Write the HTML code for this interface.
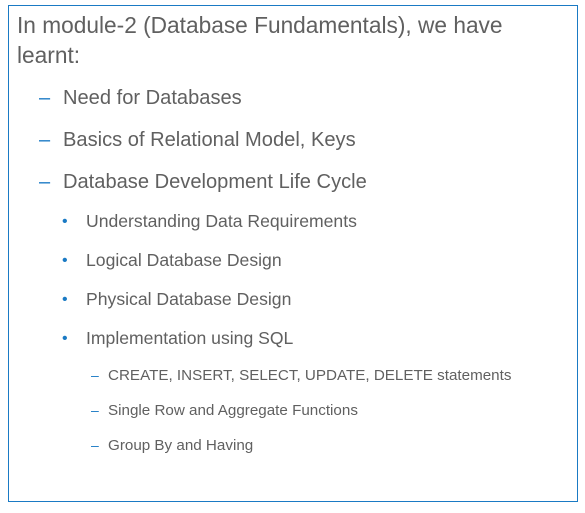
<!DOCTYPE html>
<html><head><style>
body{margin:0;width:585px;height:513px;background:#fff;font-family:"Liberation Sans",sans-serif;color:#606060;position:relative;overflow:hidden}
.box{position:absolute;left:8px;top:5px;width:568px;height:495px;border:1px solid #1a7ac4}
.t{position:absolute;white-space:nowrap;line-height:1}
.b{color:#1a7ac4;position:absolute;white-space:nowrap;line-height:1}
</style></head><body>
<div class="box"></div>
<div class="t" style="left:17px;top:14px;font-size:22.7px">In module-2 (Database Fundamentals), we have</div>
<div class="t" style="left:17px;top:44px;font-size:22.7px">learnt:</div>

<div class="b" style="left:39px;top:88px;font-size:20px">–</div>
<div class="t" style="left:63px;top:88px;font-size:20.1px">Need for Databases</div>
<div class="b" style="left:39px;top:130px;font-size:20px">–</div>
<div class="t" style="left:63px;top:130px;font-size:20.1px">Basics of Relational Model, Keys</div>
<div class="b" style="left:39px;top:172px;font-size:20px">–</div>
<div class="t" style="left:63px;top:172px;font-size:20.1px">Database Development Life Cycle</div>

<div class="b" style="left:62px;top:214px;font-size:16px">•</div>
<div class="t" style="left:86px;top:213px;font-size:17.6px">Understanding Data Requirements</div>
<div class="b" style="left:62px;top:253px;font-size:16px">•</div>
<div class="t" style="left:86px;top:252px;font-size:17.6px">Logical Database Design</div>
<div class="b" style="left:62px;top:292px;font-size:16px">•</div>
<div class="t" style="left:86px;top:291px;font-size:17.6px">Physical Database Design</div>
<div class="b" style="left:62px;top:331px;font-size:16px">•</div>
<div class="t" style="left:86px;top:330px;font-size:17.6px">Implementation using SQL</div>

<div class="b" style="left:91px;top:368px;font-size:14px">–</div>
<div class="t" style="left:108px;top:368px;font-size:15.2px">CREATE, INSERT, SELECT, UPDATE, DELETE statements</div>
<div class="b" style="left:91px;top:403px;font-size:14px">–</div>
<div class="t" style="left:108px;top:403px;font-size:15.2px">Single Row and Aggregate Functions</div>
<div class="b" style="left:91px;top:438px;font-size:14px">–</div>
<div class="t" style="left:108px;top:438px;font-size:15.2px">Group By and Having</div>
</body></html>
